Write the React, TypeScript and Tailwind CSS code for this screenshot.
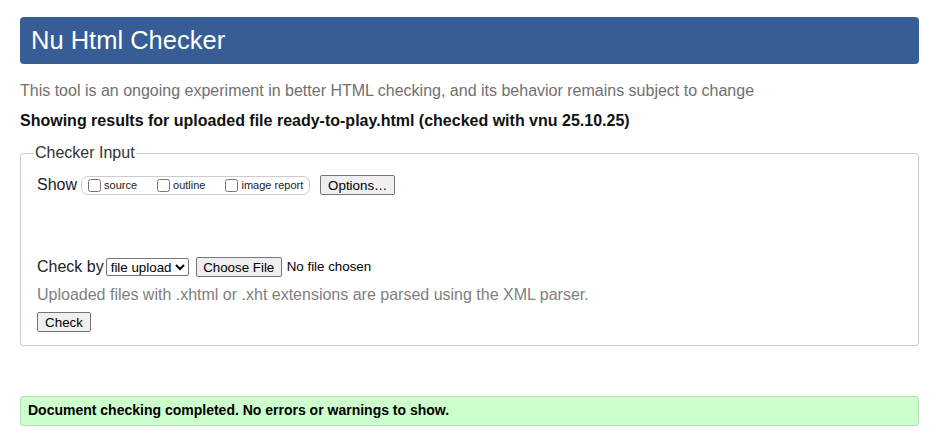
import React from "react";

const btn =
  "rounded-[2px] border border-[#767676] bg-[#efefef] px-[6px] text-[13.33px] leading-[15px] text-black";

function Check({ label }: { label: string }) {
  return (
    <label className="flex items-center whitespace-nowrap">
      <input type="checkbox" className="m-0 ml-[6px] mr-[3px] h-[13px] w-[13px] shrink-0" />
      <span className="text-[11px] leading-[13px]">{label}</span>
    </label>
  );
}

export default function App() {
  return (
    <div className="min-h-[433px] bg-white pl-5 pr-[22px] pt-[17px] font-['Liberation_Sans',Arial,sans-serif] text-[#222]">
      <div className="flex h-[47px] items-center rounded-[4px] bg-[#365d95] px-[11px]">
        <h1 className="text-[25.5px] leading-none text-white">Nu Html Checker</h1>
      </div>

      <p className="mt-[18px] text-[16px] leading-[18px] text-[#707070]">
        This tool is an ongoing experiment in better HTML checking, and its behavior remains subject to change
      </p>
      <p className="mt-[12px] text-[16px] font-bold leading-[18px] text-[#111]">
        Showing results for uploaded file ready-to-play.html (checked with vnu 25.10.25)
      </p>

      <fieldset className="mt-[14px] rounded-[3px] border border-[#ccc] px-4 pb-[11px] pt-[13px]">
        <legend className="ml-[-3px] px-[1px] text-[16px] leading-[18px] text-[#333]">Checker Input</legend>

        <div className="flex items-center text-[16px] leading-[18px]">
          <span>Show</span>
          <div className="ml-[4px] flex h-[19px] items-center rounded-[7px] border border-[#ccc] pr-[6px]">
            <Check label="source" />
            <div className="w-[14px]" />
            <Check label="outline" />
            <div className="w-[14px]" />
            <Check label="image report" />
          </div>
          <button className={`${btn} ml-[10px] h-[20px] w-[75px]`}>Options…</button>
        </div>

        <div className="mt-[62px] flex items-center text-[16px] leading-[18px]">
          <span>Check by</span>
          <select className="ml-[2px] h-[18px] w-[83px] rounded-[2px] border border-[#767676] text-[13.33px] leading-[15px] text-black">
            <option>file upload</option>
          </select>
          <button className={`${btn} ml-[7px] h-[20px] w-[86px]`}>Choose File</button>
          <span className="ml-[5px] text-[13.33px] text-black">No file chosen</span>
        </div>

        <p className="mt-[9px] text-[16px] leading-[18px] text-[#808080]">
          Uploaded files with .xhtml or .xht extensions are parsed using the XML parser.
        </p>

        <button className={`${btn} mt-[8px] h-[20px] w-[54px]`}>Check</button>
      </fieldset>

      <div className="mt-[50px] flex h-[30px] items-center rounded-[3px] border border-[#b5e0b5] bg-[#ccffcc] px-[7px]">
        <span className="text-[14px] font-bold text-black">Document checking completed. No errors or warnings to show.</span>
      </div>
    </div>
  );
}
